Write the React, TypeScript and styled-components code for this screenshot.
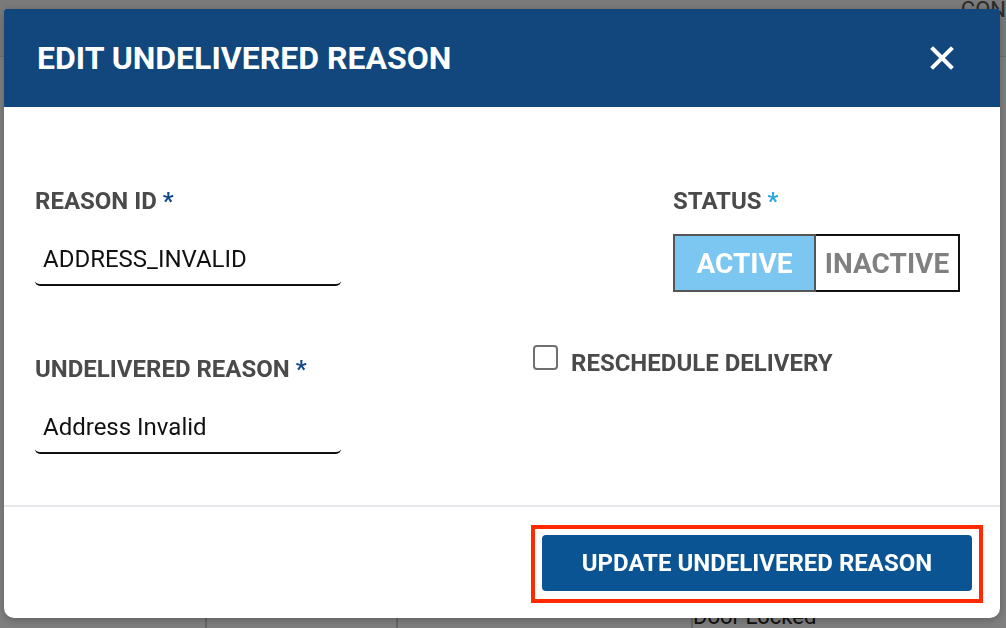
import React from 'react';
import styled, { createGlobalStyle } from 'styled-components';

const GlobalStyle = createGlobalStyle`
  html, body {
    margin: 0;
    padding: 0;
    height: 100%;
    overflow: hidden;
  }
  body {
    font-family: Roboto, "Liberation Sans", Arial, sans-serif;
    background: #ffffff;
  }
  * {
    box-sizing: border-box;
  }
`;

const App: React.FC = () => {
  return (
    <>
      <GlobalStyle />
      <Page>
        <TopBar>
          <TopBarText>CON</TopBarText>
        </TopBar>
        <Spacer />
        <TableRow>
          <Cell $width={207} />
          <Cell $width={191} />
          <Cell $width={295} />
          <CellText>Door Locked</CellText>
        </TableRow>
      </Page>
      <Overlay>
        <Modal>
          <Header>
            <Title>EDIT UNDELIVERED REASON</Title>
            <CloseButton aria-label='close'>
              <svg width='24' height='24' viewBox='0 0 24 24'>
                <path d='M3 3 L21 21 M21 3 L3 21' stroke='#ffffff' strokeWidth='4' strokeLinecap='square' />
              </svg>
            </CloseButton>
          </Header>
          <Body>
            <Column>
              <Field>
                <Label>
                  REASON ID <Star>*</Star>
                </Label>
                <TextInput value='ADDRESS_INVALID' readOnly />
              </Field>
              <Field>
                <Label>
                  UNDELIVERED REASON <Star>*</Star>
                </Label>
                <TextInput value='Address Invalid' readOnly />
              </Field>
            </Column>
            <Column>
              <StatusField>
                <Label>
                  STATUS <Star $light>*</Star>
                </Label>
                <Toggle>
                  <ToggleOption $active>ACTIVE</ToggleOption>
                  <ToggleOption>INACTIVE</ToggleOption>
                </Toggle>
              </StatusField>
              <CheckRow>
                <CheckBox />
                <CheckLabel>RESCHEDULE DELIVERY</CheckLabel>
              </CheckRow>
            </Column>
          </Body>
          <Footer>
            <Highlight>
              <PrimaryButton>UPDATE UNDELIVERED REASON</PrimaryButton>
            </Highlight>
          </Footer>
        </Modal>
      </Overlay>
    </>
  );
};

export default App;

const Page = styled.div`
  height: 100vh;
  display: flex;
  flex-direction: column;
  color: #333;
`;

const TopBar = styled.div`
  height: 57px;
  display: flex;
  justify-content: flex-end;
  border-bottom: 1px solid #ddd;
  background: #f4f4f4;
`;

const TopBarText = styled.div`
  font-size: 22px;
  color: #555;
  line-height: 22px;
  margin-top: -1px;
`;

const Spacer = styled.div`
  flex: 1;
`;

const TableRow = styled.div`
  height: 18px;
  display: flex;
  align-items: flex-start;
`;

const Cell = styled.div<{ $width: number }>`
  width: ${p => p.$width}px;
  height: 100%;
  border-right: 2px solid #ccc;
`;

const CellText = styled.div`
  font-size: 22px;
  color: #222;
  margin-top: -6px;
`;

const Overlay = styled.div`
  position: fixed;
  inset: 0;
  background: rgba(0, 0, 0, 0.5);
  display: flex;
  align-items: flex-start;
  padding: 9px 6px 0 4px;
`;

const Modal = styled.div`
  width: 996px;
  height: 609px;
  background: #ffffff;
  border-radius: 2px 2px 10px 10px;
  overflow: hidden;
  display: flex;
  flex-direction: column;
  box-shadow: 0 2px 8px rgba(0, 0, 0, 0.25);
`;

const Header = styled.div`
  height: 98px;
  flex-shrink: 0;
  background: #11477d;
  display: flex;
  align-items: center;
  justify-content: space-between;
  padding: 0 46px 0 33px;
`;

const Title = styled.h2`
  margin: 0;
  color: #ffffff;
  font-size: 32px;
  font-weight: 700;
`;

const CloseButton = styled.button`
  border: none;
  background: transparent;
  padding: 0;
  display: flex;
  cursor: pointer;
`;

const Body = styled.div`
  height: 400px;
  flex-shrink: 0;
  display: flex;
  padding: 81px 40px 0 31px;
  border-bottom: 2px solid #e6e8eb;
`;

const Column = styled.div`
  display: flex;
  flex-direction: column;
  &:first-child {
    width: 498px;
    gap: 70px;
  }
  &:last-child {
    flex: 1;
  }
`;

const Field = styled.div`
  display: flex;
  flex-direction: column;
  gap: 30px;
  width: 306px;
`;

const Label = styled.div`
  font-size: 24px;
  line-height: 26px;
  font-weight: 700;
  color: #4a4a4a;
`;

const Star = styled.span<{ $light?: boolean }>`
  color: ${p => (p.$light ? '#2aa7e1' : '#0f4a85')};
`;

const TextInput = styled.input`
  display: block;
  width: 100%;
  border: none;
  border-bottom: 2px solid #111;
  border-radius: 0 0 5px 5px;
  padding: 2px 8px 12px;
  font-family: Roboto, "Liberation Sans", Arial, sans-serif;
  font-size: 24px;
  line-height: 26px;
  color: #111;
  background: transparent;
  outline: none;
`;

const StatusField = styled.div`
  display: flex;
  flex-direction: column;
  align-self: flex-end;
  gap: 20px;
`;

const Toggle = styled.div`
  display: flex;
  height: 58px;
`;

const ToggleOption = styled.div<{ $active?: boolean }>`
  width: ${p => (p.$active ? 143 : 144)}px;
  display: flex;
  align-items: center;
  justify-content: center;
  font-size: 28px;
  font-weight: 700;
  color: ${p => (p.$active ? '#ffffff' : '#808080')};
  background: ${p => (p.$active ? '#7cc6f2' : '#ffffff')};
  border: 2px solid ${p => (p.$active ? '#555555' : '#111111')};
  ${p => (p.$active ? '' : 'border-left: none;')}
`;

const CheckRow = styled.div`
  display: flex;
  align-items: flex-start;
  gap: 13px;
  margin-top: 53px;
`;

const CheckBox = styled.div`
  width: 25px;
  height: 25px;
  border: 2px solid #707070;
  border-radius: 4px;
`;

const CheckLabel = styled.div`
  font-size: 24px;
  line-height: 26px;
  font-weight: 700;
  color: #4a4a4a;
  margin-top: 5px;
`;

const Footer = styled.div`
  flex: 1;
  display: flex;
  justify-content: flex-end;
  align-items: flex-start;
  padding: 18px 17px 0 0;
`;

const Highlight = styled.div`
  border: 4px solid #ff2a00;
  padding: 6px 7px 8px;
`;

const PrimaryButton = styled.button`
  width: 430px;
  height: 56px;
  border: none;
  border-radius: 4px;
  background: #0b5494;
  color: #ffffff;
  font-family: Roboto, "Liberation Sans", Arial, sans-serif;
  font-size: 24px;
  font-weight: 700;
  cursor: pointer;
`;
